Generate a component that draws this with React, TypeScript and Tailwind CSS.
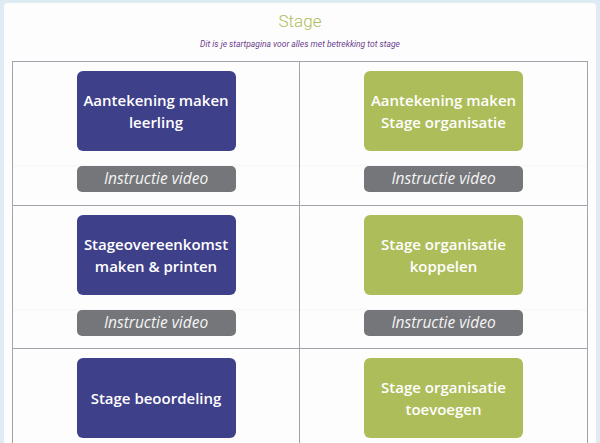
const rows: { label: string; color: 'blue' | 'green'; video: boolean }[][] = [
  [
    { label: 'Aantekening maken\nleerling', color: 'blue', video: true },
    { label: 'Aantekening maken\nStage organisatie', color: 'green', video: true },
  ],
  [
    { label: 'Stageovereenkomst\nmaken & printen', color: 'blue', video: true },
    { label: 'Stage organisatie\nkoppelen', color: 'green', video: true },
  ],
  [
    { label: 'Stage beoordeling', color: 'blue', video: false },
    { label: 'Stage organisatie\ntoevoegen', color: 'green', video: false },
  ],
];

function Tile({ label, color, video }: { label: string; color: 'blue' | 'green'; video: boolean }) {
  return (
    <div className="flex flex-col items-center pt-[9px] pb-[12px]">
      <div className="px-[4px] w-full flex justify-center shadow-[0_1px_2px_rgba(0,0,0,0.04)] pb-[14px]">
        <div
          className={`w-[159px] h-[80px] rounded-[6px] flex items-center justify-center text-center whitespace-pre-line text-white font-semibold text-[15px] leading-[22px] ${
            color === 'blue' ? 'bg-[#3f408a]' : 'bg-[#adbd5a]'
          }`}
          style={{ fontFamily: '"Open Sans", "Noto Sans", sans-serif' }}
        >
          {label}
        </div>
      </div>
      {video && (
        <div
          className="mt-px w-[159px] h-[26px] rounded-[5px] bg-[#757679] flex items-center justify-center text-[#f4f4f4] italic text-[15.5px]"
          style={{ fontFamily: '"Open Sans", "Noto Sans", sans-serif' }}
        >
          Instructie video
        </div>
      )}
    </div>
  );
}

export default function App() {
  return (
    <div className="w-[600px] h-[443px] overflow-hidden bg-[#deebf3] px-[4px] pt-[3px]">
      <div className="bg-[#fdfdfd] rounded-t-[4px] h-full px-[8px]">
        <div className="text-center pt-[7px]" style={{ fontFamily: 'Roboto, sans-serif' }}>
          <div className="text-[17px] font-light text-[#adbd5a] leading-[22px]">Stage</div>
          <div className="mt-[6px] text-[8.5px] italic text-[#6d3f8e] leading-[12px]">
            Dit is je startpagina voor alles met betrekking tot stage
          </div>
        </div>
        <div className="mt-[11px] border border-[#a2a4ab] grid grid-cols-2">
          {rows.map((row, r) =>
            row.map((cell, c) => (
              <div
                key={`${r}-${c}`}
                className={`h-[143.5px] ${c === 0 ? 'border-r border-[#a2a4ab]' : ''} ${
                  r < rows.length - 1 ? 'border-b border-[#a2a4ab]' : ''
                }`}
              >
                <Tile {...cell} />
              </div>
            ))
          )}
        </div>
      </div>
    </div>
  );
}
